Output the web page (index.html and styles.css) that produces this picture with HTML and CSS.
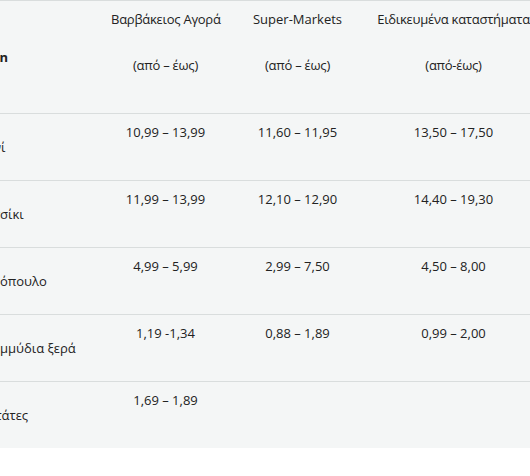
FILE: index.html
```html
<!DOCTYPE html>
<html lang="el">
<head>
<meta charset="utf-8">
<title>Τιμές</title>
<link rel="stylesheet" href="styles.css">
</head>
<body>
<div class="viewport">
  <table class="prices">
    <colgroup>
      <col class="c-item">
      <col class="c-a">
      <col class="c-b">
      <col class="c-c">
    </colgroup>
    <thead>
      <tr>
        <th class="label head"><strong class="ltr">Τιμές σε €/kg, Price in</strong></th>
        <th class="val"><p class="gr">Βαρβάκειος Αγορά</p><p class="gr">(από – έως)</p></th>
        <th class="val"><p>Super-Markets</p><p class="gr">(από – έως)</p></th>
        <th class="val"><p class="gr">Ειδικευμένα καταστήματα</p><p class="gr">(από-έως)</p></th>
      </tr>
    </thead>
    <tbody>
      <tr>
        <td class="label">Αρνί</td>
        <td class="val"><p>10,99 – 13,99</p></td>
        <td class="val"><p>11,60 – 11,95</p></td>
        <td class="val"><p>13,50 – 17,50</p></td>
      </tr>
      <tr>
        <td class="label">Κατσίκι</td>
        <td class="val"><p>11,99 – 13,99</p></td>
        <td class="val"><p>12,10 – 12,90</p></td>
        <td class="val"><p>14,40 – 19,30</p></td>
      </tr>
      <tr>
        <td class="label">Κοτόπουλο</td>
        <td class="val"><p>4,99 – 5,99</p></td>
        <td class="val"><p>2,99 – 7,50</p></td>
        <td class="val"><p>4,50 – 8,00</p></td>
      </tr>
      <tr>
        <td class="label">Κρεμμύδια ξερά</td>
        <td class="val"><p>1,19 -1,34</p></td>
        <td class="val"><p>0,88 – 1,89</p></td>
        <td class="val"><p>0,99 – 2,00</p></td>
      </tr>
      <tr>
        <td class="label">Πατάτες</td>
        <td class="val"><p>1,69 – 1,89</p></td>
        <td class="val"></td>
        <td class="val"></td>
      </tr>
    </tbody>
  </table>
</div>
</body>
</html>
```

FILE: styles.css
```css
html, body {
  margin: 0;
  padding: 0;
  background: #ffffff;
}

body {
  font-family: "Open Sans", "Noto Sans", sans-serif;
  font-size: 13px;
  color: #222222;
}

.viewport {
  width: 530px;
  overflow: hidden;
}

.prices {
  margin-left: -38px;
  border-collapse: collapse;
  table-layout: fixed;
  width: 586px;
  background: #f4f6f6;
}

.c-item { width: 133px; }
.c-a { width: 141px; }
.c-b { width: 123px; }
.c-c { width: 189px; }

.prices th,
.prices td {
  border-top: 1px solid #d9dddd;
  padding: 8px 16px 12px;
  font-weight: normal;
  line-height: 20px;
}

.prices .label {
  text-align: left;
  vertical-align: middle;
  white-space: nowrap;
  overflow: hidden;
  padding: 10px 16px;
}

.prices .head {
  direction: rtl;
  padding-right: 87px;
}

.prices .ltr {
  direction: ltr;
  unicode-bidi: isolate;
  font-weight: bold;
}

.prices .val {
  text-align: center;
  vertical-align: top;
  white-space: nowrap;
}

.prices p {
  margin: 0 0 26px;
}

.prices .gr {
  letter-spacing: -0.25px;
}
```
